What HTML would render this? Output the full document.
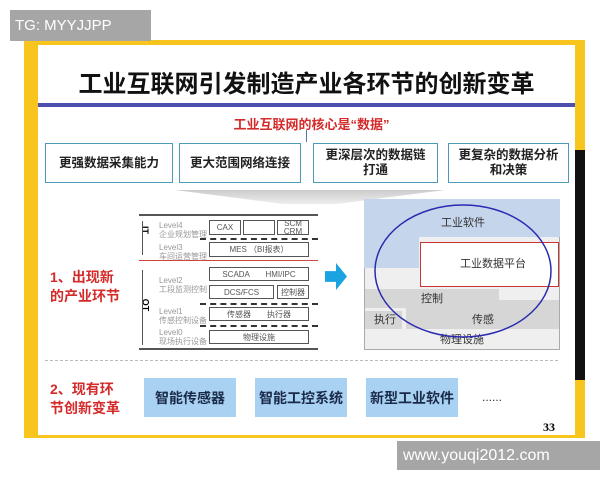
<!DOCTYPE html>
<html><head><meta charset="utf-8"><style>
body{margin:0;width:600px;height:480px;background:#fff;position:relative;overflow:hidden;font-family:"Liberation Sans","Noto Sans CJK SC",sans-serif}
.a{position:absolute}
.box{position:absolute;border:1.5px solid #4a9ab8;background:#fff;font-weight:bold;font-size:12.5px;color:#222;display:flex;align-items:center;justify-content:center;text-align:center;line-height:15px}
.bb{position:absolute;background:#a9d2f2;font-weight:bold;font-size:14px;color:#1a2a4a;display:flex;align-items:center;justify-content:center}
.sm{position:absolute;font-size:8px;color:#999;line-height:9px}
.cell{position:absolute;border:1px solid #555;background:#fff;font-size:8px;color:#555;display:flex;align-items:center;justify-content:center;box-sizing:border-box}
.dash{position:absolute;border-top:2px dashed #333;height:0}
.red{color:#d42a2a;font-weight:bold;font-size:14px;line-height:19px}
.lb{position:absolute;font-size:11px;color:#333;line-height:12px}
</style></head><body>
<div class="a" style="left:24px;top:40px;width:561px;height:398px;background:#f7c51e"></div>
<div class="a" style="left:38px;top:45px;width:537px;height:390px;background:#fff"></div>
<div class="a" style="left:575px;top:150px;width:10px;height:230px;background:#111"></div>
<div class="a" style="left:10px;top:10px;width:141px;height:31px;background:#a6a6a6;color:#fff;font-size:15px;line-height:31px;padding-left:5px;box-sizing:border-box">TG: MYYJJPP</div>
<div class="a" style="left:38px;top:64px;width:537px;text-align:center;font-size:24px;font-weight:bold;color:#111">工业互联网引发制造产业各环节的创新变革</div>
<div class="a" style="left:38px;top:103px;width:537px;height:4px;background:#4a4fb0"></div>
<div class="a" style="left:38px;top:114px;width:537px;text-align:center;font-size:13px;font-weight:bold;color:#d42a2a;padding-left:10px;box-sizing:border-box">工业互联网的核心是“数据”</div>
<div class="a" style="left:306px;top:130px;width:1px;height:12px;background:#4a7ab0"></div>
<div class="box" style="left:45px;top:143px;width:126px;height:38px">更强数据采集能力</div>
<div class="box" style="left:179px;top:143px;width:120px;height:38px">更大范围网络连接</div>
<div class="box" style="left:313px;top:143px;width:123px;height:38px">更深层次的数据链<br>打通</div>
<div class="box" style="left:448px;top:143px;width:119px;height:38px">更复杂的数据分析<br>和决策</div>
<div class="a" style="left:175px;top:190px;width:270px;height:14px;background:linear-gradient(#ccc,#eee);clip-path:polygon(0 0,100% 0,60% 100%,40% 100%)"></div>
<div class="a red" style="left:50px;top:268px">1、出现新<br>的产业环节</div>
<div class="a red" style="left:50px;top:380px">2、现有环<br>节创新变革</div>
<!-- left diagram -->
<div class="a" style="left:139px;top:214px;width:179px;height:2px;background:#555"></div>
<div class="a" style="left:139px;top:348px;width:179px;height:2px;background:#555"></div>
<div class="a" style="left:139px;top:260px;width:179px;height:1px;background:#c44"></div>
<div class="sm" style="left:159px;top:221px">Level4<br>企业规划管理</div>
<div class="sm" style="left:159px;top:243px">Level3<br>车间运营管理</div>
<div class="sm" style="left:159px;top:276px">Level2<br>工段监测控制</div>
<div class="sm" style="left:159px;top:307px">Level1<br>传感控制设备</div>
<div class="sm" style="left:159px;top:328px">Level0<br>现场执行设备</div>
<div class="a" style="left:141px;top:225px;font-size:9px;font-weight:bold;transform:rotate(90deg)">IT</div>
<div class="a" style="left:139px;top:300px;font-size:9px;font-weight:bold;transform:rotate(90deg)">OT</div>
<div class="a" style="left:142px;top:221px;width:1px;height:34px;background:#555"></div>
<div class="a" style="left:142px;top:270px;width:1px;height:75px;background:#555"></div>
<div class="cell" style="left:209px;top:220px;width:32px;height:15px">CAX</div>
<div class="cell" style="left:243px;top:220px;width:32px;height:15px"></div>
<div class="cell" style="left:277px;top:220px;width:32px;height:15px;line-height:8px;text-align:center">SCM<br>CRM</div>
<div class="dash" style="left:200px;top:238px;width:118px"></div>
<div class="cell" style="left:209px;top:242px;width:100px;height:15px">MES （BI报表）</div>
<div class="cell" style="left:209px;top:267px;width:100px;height:14px">SCADA　　HMI/IPC</div>
<div class="cell" style="left:209px;top:285px;width:65px;height:14px">DCS/FCS</div>
<div class="cell" style="left:277px;top:285px;width:32px;height:14px">控制器</div>
<div class="dash" style="left:200px;top:303px;width:118px"></div>
<div class="cell" style="left:209px;top:307px;width:100px;height:14px">传感器　　执行器</div>
<div class="dash" style="left:200px;top:325px;width:118px"></div>
<div class="cell" style="left:209px;top:330px;width:100px;height:14px">物理设施</div>
<div class="a" style="left:325px;top:263px;width:22px;height:27px;background:#1aa3e0;clip-path:polygon(0 30%,50% 30%,50% 0,100% 50%,50% 100%,50% 70%,0 70%)"></div>
<!-- right diagram -->
<div class="a" style="left:364px;top:199px;width:196px;height:151px;background:#efefef;border:1px solid #aaa;box-sizing:border-box"></div>
<div class="a" style="left:364px;top:199px;width:196px;height:38px;background:#c5d6ec"></div>
<div class="a" style="left:364px;top:237px;width:55px;height:31px;background:#c5d6ec"></div>
<div class="a" style="left:365px;top:289px;width:134px;height:19px;background:#d6d6d6"></div>
<div class="a" style="left:365px;top:311px;width:37px;height:18px;background:#d6d6d6"></div>
<div class="a" style="left:406px;top:300px;width:153px;height:29px;background:#d6d6d6"></div>
<div class="a" style="left:406px;top:289px;width:93px;height:19px;background:#d6d6d6"></div>
<div class="a" style="left:420px;top:242px;width:139px;height:45px;background:#fff;border:1.5px solid #c33;box-sizing:border-box"></div>
<div class="lb" style="left:441px;top:217px">工业软件</div>
<div class="lb" style="left:460px;top:258px">工业数据平台</div>
<div class="lb" style="left:421px;top:293px">控制</div>
<div class="lb" style="left:374px;top:314px">执行</div>
<div class="lb" style="left:472px;top:314px">传感</div>
<div class="lb" style="left:440px;top:334px">物理设施</div>
<svg class="a" style="left:364px;top:199px" width="196" height="152"><ellipse cx="99" cy="72" rx="88" ry="66" fill="none" stroke="#2a2ab0" stroke-width="1.5"/></svg>
<div class="a" style="left:45px;top:360px;width:513px;border-top:1px dashed #bbb"></div>
<div class="bb" style="left:144px;top:378px;width:92px;height:39px">智能传感器</div>
<div class="bb" style="left:255px;top:378px;width:92px;height:39px">智能工控系统</div>
<div class="bb" style="left:366px;top:378px;width:92px;height:39px">新型工业软件</div>
<div class="a" style="left:482px;top:390px;font-size:12px;color:#333">......</div>
<div class="a" style="left:543px;top:420px;font-size:12px;font-weight:bold;font-family:'Liberation Serif',serif">33</div>
<div class="a" style="left:397px;top:441px;width:203px;height:29px;background:#a6a6a6;color:#fff;font-size:16px;line-height:29px;padding-left:6px;box-sizing:border-box">www.youqi2012.com</div>
</body></html>
